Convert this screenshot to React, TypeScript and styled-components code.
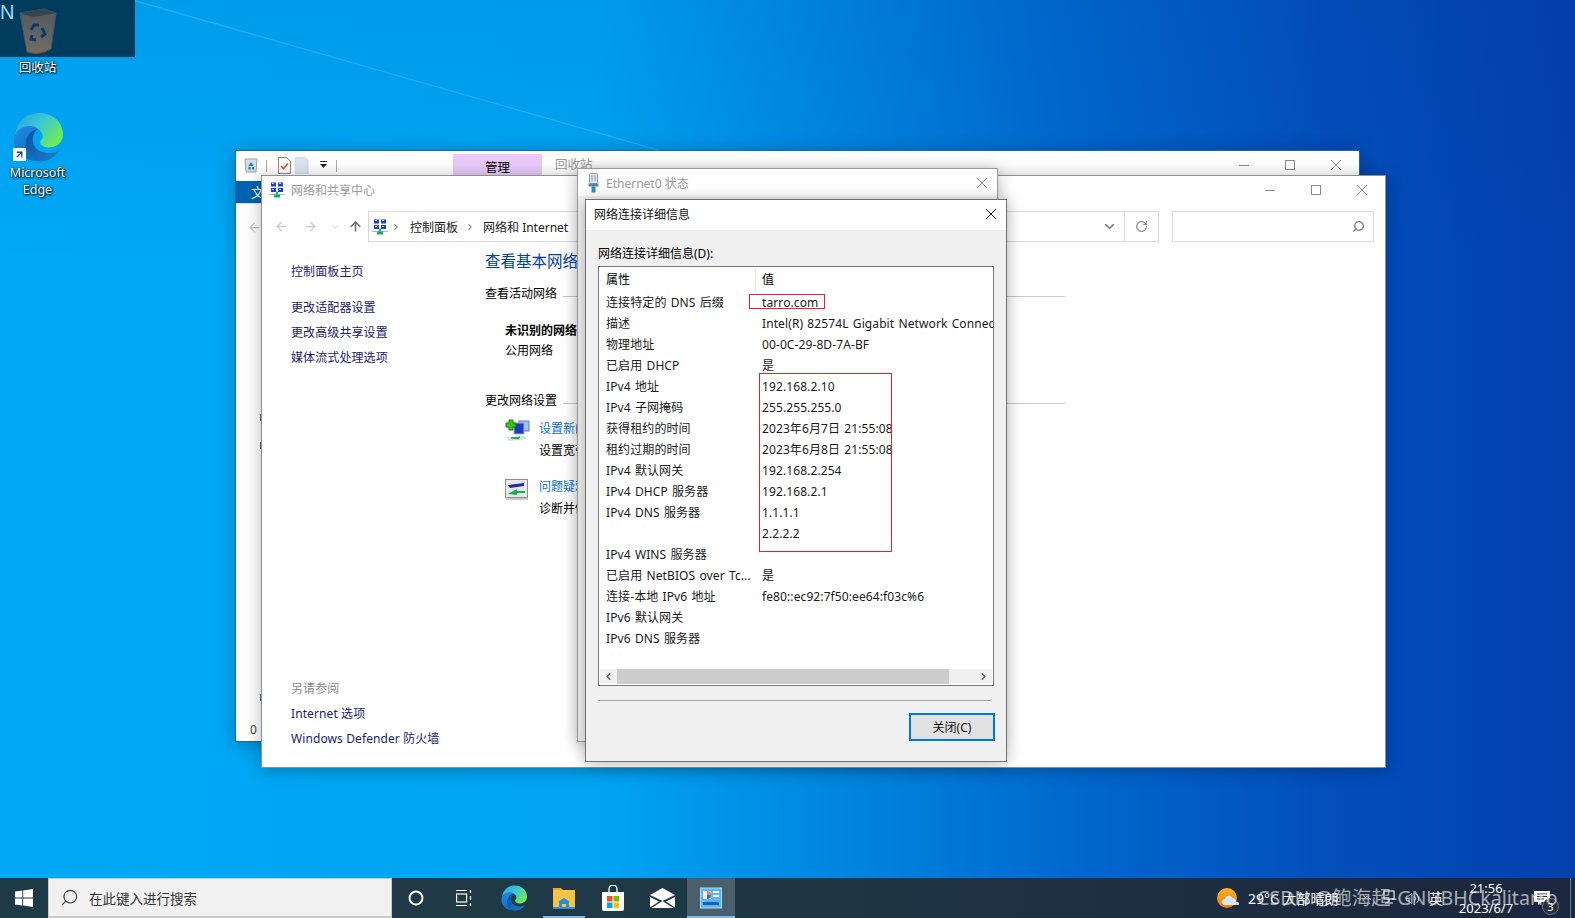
import React from "react";
import styled, { createGlobalStyle } from "styled-components";
import { ChevronDown, ChevronRight, ChevronLeft, ArrowLeft, ArrowRight, ArrowUp, RotateCw, Search, ChevronUp, Volume2 } from "lucide-react";

const Global = createGlobalStyle`
  html, body { margin: 0; padding: 0; width: 1575px; height: 918px; overflow: hidden; }
  body { font-family: "Noto Sans", "Noto Sans CJK SC", sans-serif; font-size: 12px; color: #000; }
  * { box-sizing: border-box; }
`;

const Screen = styled.div`
  width: 1575px; height: 918px; display: flex; flex-direction: column; overflow: hidden;
`;
const Desktop = styled.div`
  position: relative; flex: 1; overflow: hidden;
  background:
    linear-gradient(180deg, rgba(0,40,120,.08) 0%, rgba(0,0,0,0) 30%),
    linear-gradient(90deg, #00a8f6 0%, #00a4f3 38%, #0088e2 52%, #0068cf 68%, #034fbc 84%, #0340ae 100%);
`;
const Wallpaper = styled.svg`
  position: absolute; inset: 0; width: 100%; height: 100%;
`;
const Selection = styled.div`
  position: absolute; left: 0; top: 0; width: 135px; height: 57px; background: #003c5e; overflow: hidden;
`;
const CutLetter = styled.span`
  position: absolute; left: 0; top: 1px; font: 400 20px "Liberation Sans", sans-serif; color: #9ddcff;
`;
const DesktopIcon = styled.div<{ $y: number }>`
  position: absolute; left: 0; top: ${p => p.$y}px; width: 75px; display: flex; flex-direction: column; align-items: center;
`;
const DesktopLabel = styled.div<{ $top?: number }>`
  color: #fff; font-size: 12.5px; line-height: 17px; text-align: center; text-shadow: 1px 1px 2px #000, 0 0 2px #000; margin-top: ${p => p.$top || 0}px;
`;
const ShortcutBadge = styled.span`
  position: absolute; left: 0; top: 36px; width: 13px; height: 13px; background: #fff; display: flex; align-items: center; justify-content: center;
`;
const EdgeWrap = styled.div`
  position: relative; width: 50px; height: 50px; margin-bottom: 1px;
`;

const Win = styled.div<{ $x: number; $y: number; $w: number; $h: number; $border: string; $bg?: string }>`
  position: absolute; left: ${p => p.$x}px; top: ${p => p.$y}px; width: ${p => p.$w}px; height: ${p => p.$h}px;
  background: ${p => p.$bg || "#fff"}; border: 1px solid ${p => p.$border}; display: flex; flex-direction: column; overflow: hidden;
  box-shadow: 0 2px 16px rgba(0,0,0,.28);
`;
const Spacer = styled.div` flex: 1; `;
const Controls = styled.div<{ $h?: number }>`
  display: flex; align-items: center; height: ${p => p.$h ? `${p.$h}px` : "auto"};
`;
const Ctl = styled.span<{ $w?: number }>`
  width: ${p => p.$w || 46}px; display: flex; align-items: center; justify-content: center;
`;

/* recycle bin explorer */
const Qat = styled.div`
  height: 30px; display: flex; align-items: flex-start; padding: 3px 0 0 6px; flex: none;
`;
const QatIcon = styled.span<{ $before?: number }>`
  width: 18px; height: 22px; display: flex; align-items: center; justify-content: center; margin-left: ${p => p.$before || 0}px;
`;
const QatSep = styled.span<{ $before: number; $after: number }>`
  width: 1px; height: 12px; background: #a8a8a8; margin: 6px ${p => p.$after}px 0 ${p => p.$before}px;
`;
const ManageTab = styled.div`
  margin-left: 116px; width: 89px; height: 23px; background: #e9c9fa; display: flex; align-items: center; justify-content: center; padding-top: 1px; font-size: 12.5px;
`;
const RecycleTitle = styled.div`
  margin-left: 13px; color: #9a9a9a; line-height: 22px; font-size: 12.5px;
`;
const RibbonRow = styled.div`
  height: 22px; display: flex; flex: none; background: #fff; box-shadow: 0 1px 0 #dcdcdc;
`;
const FileTab = styled.div`
  width: 52px; background: #0063b1; color: #fff; padding-left: 15px; line-height: 22px; font-size: 13px;
`;
const BackNav = styled.div`
  padding: 17px 0 0 11px; color: #c8c8c8; flex: 1; position: relative;
`;
const BackStatus = styled.div`
  position: absolute; left: 14px; bottom: 3px; color: #444; font-size: 12px; word-spacing: 3px; white-space: nowrap;
`;
const ClipMark = styled.span<{ $y: number }>`
  position: absolute; left: 24px; top: ${p => p.$y}px; width: 2px; height: 7px; background: #2b79b5;
`;

/* network center */
const TitleBar = styled.div`
  height: 28px; display: flex; align-items: center; flex: none; padding-left: 7px;
`;
const FrontTitle = styled.div`
  margin-left: 6px; color: #9b9b9b; font-size: 12px;
`;
const NavBar = styled.div`
  height: 43px; display: flex; align-items: flex-start; padding: 7px 0 0 5px; flex: none;
`;
const NavBtn = styled.span<{ $w: number; $c?: string }>`
  width: ${p => p.$w}px; height: 31px; display: flex; align-items: center; justify-content: center; color: ${p => p.$c || "#c9c9c9"}; flex: none;
`;
const Address = styled.div`
  width: 791px; height: 31px; border: 1px solid #d9d9d9; display: flex; align-items: center; margin-left: 2px; padding-left: 3px;
`;
const Crumb = styled.span<{ $grow?: boolean; $left: number }>`
  font-size: 12px; margin: 0 7px 0 ${p => p.$left}px; color: #1a1a1a; flex: ${p => p.$grow ? 1 : "none"};
`;
const AddrBtn = styled.span<{ $w: number }>`
  width: ${p => p.$w}px; height: 29px; display: flex; align-items: center; justify-content: center; color: #808080;
`;
const AddrDiv = styled.span`
  width: 1px; height: 29px; background: #d9d9d9;
`;
const SearchBox = styled.div`
  width: 202px; height: 31px; border: 1px solid #d9d9d9; margin-left: 13px; display: flex; align-items: center; justify-content: flex-end; padding-right: 8px; color: #808080;
`;
const Content = styled.div`
  flex: 1; display: flex; min-height: 0;
`;
const Sidebar = styled.div`
  width: 223px; padding: 12px 0 16px 29px; display: flex; flex-direction: column; flex: none;
`;
const SideLink = styled.div<{ $gap?: number; $muted?: boolean }>`
  line-height: 25px; height: 25px; color: ${p => p.$muted ? "#8a8a8a" : "#1c1c6e"}; margin-bottom: ${p => p.$gap || 0}px; white-space: nowrap; letter-spacing: .1px;
`;
const Main = styled.div`
  width: 580px; padding-top: 2px; flex: none;
`;
const Heading = styled.div`
  font-size: 15.5px; line-height: 24px; color: #003fa8; white-space: nowrap;
`;
const Section = styled.div<{ $top: number }>`
  display: flex; align-items: center; height: 20px; margin-top: ${p => p.$top}px; white-space: nowrap;
`;
const SectionLine = styled.span`
  flex: 1; height: 1px; background: #c8c8c8; margin: 7px 0 0 6px;
`;
const NetBlock = styled.div<{ $top: number }>`
  padding-left: 20px; margin-top: ${p => p.$top}px; line-height: 20px;
`;
const Bold = styled.div` font-weight: 700; `;
const Task = styled.div<{ $top: number }>`
  display: flex; margin: ${p => p.$top}px 0 0 20px;
`;
const TaskIcon = styled.div<{ $top?: number }>` width: 34px; flex: none; padding-top: ${p => p.$top || 0}px; `;
const TaskText = styled.div` line-height: 22px; white-space: nowrap; `;
const TaskLink = styled.div` color: #0a6fd6; `;

/* ethernet */
const EthTitle = styled.div`
  margin-left: 6px; color: #9a9a9a; font-size: 12px;
`;
const EthBar = styled.div`
  height: 27px; display: flex; align-items: center; padding-left: 9px; flex: none;
`;
const EthBody = styled.div` flex: 1; background: #f0f0f0; `;

/* details */
const DlgTitle = styled.div`
  height: 30px; background: #fff; display: flex; align-items: center; padding: 0 0 2px 8px; flex: none; color: #111;
`;
const DlgBody = styled.div`
  flex: 1; background: #f0f0f0; padding: 15px 12px 0 12px; display: flex; flex-direction: column; min-height: 0;
`;
const ListLabel = styled.div` height: 21px; line-height: 18px; flex: none; `;
const ListBox = styled.div`
  position: relative; height: 420px; background: #fff; border: 1px solid #7a7a7a; display: flex; flex-direction: column; flex: none;
`;
const ListHead = styled.div`
  height: 24.5px; display: flex; align-items: center; flex: none; position: relative; padding: 0 0 .5px 7px;
`;
const HeadSep = styled.span`
  position: absolute; left: 156px; top: 2px; width: 1px; height: 22px; background: #e5e5e5;
`;
const Rows = styled.div` flex: 1; overflow: hidden; padding-left: 7px; min-height: 0; `;
const Row = styled.div`
  display: flex; height: 21px; align-items: center; white-space: nowrap; color: #1a1a1a; letter-spacing: .1px; word-spacing: 1px;
`;
const Prop = styled.div` width: 156px; flex: none; overflow: hidden; `;
const Val = styled.div<{ $left?: number }>` flex: none; margin-left: ${p => p.$left || 0}px; `;
const RedBox = styled.div<{ $l: number; $t: number; $w: number; $h: number }>`
  position: absolute; left: ${p => p.$l}px; top: ${p => p.$t}px; width: ${p => p.$w}px; height: ${p => p.$h}px; border: 1px solid #e8202a; pointer-events: none;
`;
const HScroll = styled.div`
  height: 15px; margin: 0 1px 1px; display: flex; align-items: center; background: #f0f0f0; flex: none; color: #555;
`;
const ScrollBtn = styled.span`
  width: 17px; display: flex; align-items: center; justify-content: center; flex: none;
`;
const Thumb = styled.div` width: 332px; height: 15px; background: #cdcdcd; flex: none; `;
const Groove = styled.div` flex: 1; `;
const Hr = styled.div` height: 1px; background: #a8a8a8; margin-top: 14px; margin-right: 3px; flex: none; `;
const DlgFoot = styled.div` display: flex; justify-content: flex-end; padding-top: 12px; `;
const CloseBtn = styled.div`
  width: 86px; height: 28px; background: #e1e1e1; border: 2px solid #0078d7; display: flex; align-items: center; justify-content: center; color: #111; margin-right: -1px;
`;

/* taskbar */
const Taskbar = styled.div`
  position: relative; height: 40px; flex: none; display: flex; align-items: stretch;
  background: linear-gradient(90deg, #1f3a47 0%, #1f3845 45%, #1d2c40 80%, #1b2640 100%);
  color: #fff;
`;
const StartBtn = styled.div` width: 48px; display: flex; align-items: center; justify-content: center; `;
const SearchBar = styled.div`
  width: 344px; background: #f1f1f1; display: flex; align-items: center; padding-left: 11px; color: #333; font-size: 13.5px; border: 1px solid #c8c8c8; border-bottom-width: 2px;
`;
const SearchHint = styled.span` margin-left: 10px; `;
const TbBtn = styled.div<{ $w: number; $open?: boolean; $active?: boolean }>`
  width: ${p => p.$w}px; display: flex; align-items: center; justify-content: center; position: relative;
  background: ${p => p.$active ? "#4a5e6c" : "transparent"};
  ${p => p.$open ? `&::after { content: ""; position: absolute; left: ${p.$active ? 0 : 4}px; right: ${p.$active ? 0 : 4}px; bottom: 0; height: 2px; background: #7cbcf0; }` : ""}
`;
const Tray = styled.div`
  position: absolute; inset: 0 0 0 auto; width: 361px; display: flex; align-items: center;
`;
const Weather = styled.div` width: 28px; display: flex; justify-content: center; flex: none; `;
const WeatherText = styled.div` margin-left: 6px; font-size: 14px; width: 108px; white-space: nowrap; flex: none; `;
const TrayIcon = styled.span<{ $w: number }>`
  width: ${p => p.$w}px; display: flex; justify-content: center; flex: none; font-size: 14px;
`;
const Clock = styled.div`
  width: 76px; text-align: center; font-size: 13px; line-height: 20px; flex: none;
`;
const Notify = styled.div`
  position: relative; width: 36px; display: flex; justify-content: center; flex: none;
`;
const Badge = styled.span`
  position: absolute; left: 18px; top: 7px; width: 17px; height: 17px; border-radius: 50%; background: rgba(40,50,60,.85); border: 1px solid #777; font-size: 11px; line-height: 15px; text-align: center;
`;
const ShowDesktop = styled.span`
  position: absolute; right: 4px; top: 0; bottom: 0; width: 1px; background: #6f7a85;
`;
const Watermark = styled.div`
  position: absolute; left: 1257px; top: 6px; font-size: 19.6px; line-height: 28px; color: rgba(230,230,230,.7); white-space: nowrap; pointer-events: none;
`;

/* drawings */
const NetIcon = ({ s = 16 }: { s?: number }) => (
  <svg width={s} height={s} viewBox="0 0 16 16">
    <rect x="2" y="0.5" width="5" height="4" fill="#1a3fc4" /><rect x="9" y="0.5" width="5" height="4" fill="#1a3fc4" />
    <rect x="2" y="6" width="5" height="4" fill="#1a3fc4" /><rect x="9" y="6" width="5" height="4" fill="#1a3fc4" />
    <rect x="3" y="1" width="2" height="1" fill="#bcd4ff" /><rect x="10" y="1" width="2" height="1" fill="#bcd4ff" />
    <rect x="3" y="7" width="2" height="1" fill="#bcd4ff" /><rect x="10" y="7" width="2" height="1" fill="#bcd4ff" />
    <rect x="0" y="12" width="16" height="1" fill="#b5b5b5" />
    <rect x="7" y="9.5" width="2" height="3" fill="#14b060" /><rect x="5" y="12.5" width="6" height="3" fill="#14b060" />
  </svg>
);
const Edge = ({ s = 50 }: { s?: number }) => {
  const id = `e${s}`;
  return (
    <svg width={s} height={s} viewBox="0 0 48 48">
      <defs>
        <linearGradient id={`${id}a`} x1="0" y1="0" x2="1" y2="0.6"><stop offset="0" stopColor="#2a9fe0" /><stop offset=".5" stopColor="#38c6d8" /><stop offset="1" stopColor="#6cec58" /></linearGradient>
        <linearGradient id={`${id}b`} x1="0" y1="0" x2="0.5" y2="1"><stop offset="0" stopColor="#1f8fe3" /><stop offset="1" stopColor="#0f6bc4" /></linearGradient>
        <linearGradient id={`${id}c`} x1="0" y1="0" x2="1" y2="1"><stop offset="0" stopColor="#0c4f9c" /><stop offset="1" stopColor="#1a7fd0" /></linearGradient>
      </defs>
      <path d="M2 22C4 9 13 1 25 1c13 0 23 9 23 20 0 8-6 13-14 13-4 0-8-2-8-5 0-1 1-2 2-3 1-2 1-6-3-9C19 13 7 13 2 22z" fill={`url(#${id}a)`} />
      <path d="M2 22C6 14 17 11 24 16c-7 1-13 8-12 17 1 6 5 11 10 14C10 47 0 37 1 26c0-1 .5-3 1-4z" fill={`url(#${id}b)`} />
      <path d="M24 16c-7 1-13 8-12 17 1 6 5 11 10 14 1 0 3 .5 4 .5 8 0 14-4 19-11-3 2-6 3-11 3-8 0-15-5-15-13 0-4 2-8 5-10.5z" fill={`url(#${id}c)`} />
    </svg>
  );
};
const Recycle = () => (
  <svg width="42" height="46" viewBox="0 0 42 46">
    <defs><linearGradient id="bin" x1="0" y1="0" x2="0" y2="1"><stop offset="0" stopColor="#52585c" /><stop offset=".8" stopColor="#6a6966" /><stop offset="1" stopColor="#7d6a5a" /></linearGradient></defs>
    <path d="M3 5 L27 1 L39 5 L34 41 Q22 48 10 44 Z" fill="url(#bin)" stroke="#47555c" />
    <path d="M3 5 L27 1 L39 5 L17 9 Z" fill="#33454e" />
    <g fill="none" stroke="#0d3a6a" strokeWidth="3">
      <path d="M14 22 l3-5 h5" /><path d="M25 20 l3 6 -4 3" /><path d="M19 32 l-5 -1 1 -4" />
    </g>
  </svg>
);
const PlugIcon = () => (
  <svg width="13" height="20" viewBox="0 0 13 20">
    <rect x="2.5" y="0.5" width="8" height="10" rx="1" fill="#dbe6ef" stroke="#7f98ad" />
    <path d="M5 2v6M8 2v6" stroke="#89a" />
    <rect x="1.5" y="10.5" width="10" height="3" fill="#5b87ae" />
    <rect x="4.5" y="13.5" width="4" height="6" fill="#2e88c8" />
  </svg>
);
const BinSmall = () => (
  <svg width="14" height="15" viewBox="0 0 14 15">
    <path d="M1 1h12l-1 13H2z" fill="#d5dde3" stroke="#9aa4ac" />
    <path d="M7 4l2.5 4h-5zM4.5 9h2v2.5h-2zM8 9h2v2.5H8z" fill="#1478c8" />
  </svg>
);
const DocCheck = () => (
  <svg width="13" height="17" viewBox="0 0 13 17">
    <path d="M.5.5h8l4 4v12H.5z" fill="#fff" stroke="#8a8a8a" />
    <path d="M3 9l2.5 2.5L10 6.5" fill="none" stroke="#e0521c" strokeWidth="1.6" />
  </svg>
);
const DocBlank = () => (
  <svg width="14" height="17" viewBox="0 0 14 17"><path d="M0 0h10l3 3 0 14H0z" fill="#dbe4f2" stroke="#c9d4e6" /></svg>
);
const QatDrop = () => (
  <svg width="10" height="10" viewBox="0 0 10 10"><rect x="1" y="1" width="7" height="1" fill="#222" /><path d="M1 4h7L4.5 8z" fill="#222" /></svg>
);
const NewConn = () => (
  <svg width="26" height="24" viewBox="0 0 26 24">
    <rect x="14" y="2" width="10" height="10" fill="#9ec4ee" stroke="#5a7fc0" />
    <rect x="9" y="4" width="10" height="11" fill="#1b3bc0" stroke="#aab" />
    <path d="M1 18l18-1 3 3-18 2z" fill="#d8dde0" />
    <path d="M6 19l9-1-2 2z" fill="#17b45a" stroke="#17b45a" />
    <path d="M4 1h4v3h3v4H8v3H4V8H1V4h3z" fill="#3fc01e" stroke="#1d7a10" />
  </svg>
);
const TroubleIcon = () => (
  <svg width="24" height="22" viewBox="0 0 24 22">
    <rect x=".5" y=".5" width="22" height="18" fill="#e8e8e8" stroke="#8f8f8f" />
    <path d="M3 6l16-2v3L5 9z" fill="#1c2f9c" />
    <path d="M3 15l9-5v2h8v2h-8v2z" fill="#16b04f" />
    <rect x="1" y="19" width="22" height="2" fill="#c9c9c9" />
  </svg>
);
const WinLogo = () => (
  <svg width="18" height="18" viewBox="0 0 18 18" fill="#fff">
    <path d="M0 2.6 7.3 1.6V8.5H0zM8.2 1.5 18 0V8.5H8.2zM0 9.5h7.3v6.9L0 15.4zM8.2 9.5H18V18L8.2 16.5z" />
  </svg>
);
const TaskView = () => (
  <svg width="16" height="18" viewBox="0 0 16 18" fill="none" stroke="#fff" strokeWidth="1.2">
    <path d="M0 1.5h11M0 16.5h11" /><rect x=".6" y="5" width="10" height="8" /><path d="M14.5 1v3M14.5 7v4M14.5 14v3" />
  </svg>
);
const Folder = () => (
  <svg width="24" height="24" viewBox="0 0 24 24">
    <path d="M1 2h8l2 2h-10z" fill="#e8a82c" />
    <rect x="1" y="4" width="22" height="19" fill="#f4c545" />
    <path d="M7 22V15l5-3 5 3v7h-3v-4h-4v4z" fill="#2a8fd8" />
    <rect x="1" y="21" width="22" height="2" fill="#2a8fd8" />
  </svg>
);
const Store = () => (
  <svg width="24" height="26" viewBox="0 0 24 26">
    <path d="M8 7V4a4 4 0 0 1 8 0v3" fill="none" stroke="#fff" strokeWidth="1.3" />
    <path d="M1 7h22v17a2 2 0 0 1-2 2H3a2 2 0 0 1-2-2z" fill="#fff" />
    <rect x="6" y="11" width="5.5" height="5.5" fill="#f25022" /><rect x="12.5" y="11" width="5.5" height="5.5" fill="#7fba00" />
    <rect x="6" y="17.5" width="5.5" height="5.5" fill="#00a4ef" /><rect x="12.5" y="17.5" width="5.5" height="5.5" fill="#ffb900" />
  </svg>
);
const Mail = () => (
  <svg width="25" height="20" viewBox="0 0 25 20" fill="#fff">
    <path d="M0 7 12.5 0 25 7 12.5 13z" /><path d="M0 9 9 13.5 0 19.5zM25 9 16 13.5 25 19.5zM1.5 20l11-7 11 7z" />
  </svg>
);
const Panel = () => (
  <svg width="22" height="22" viewBox="0 0 22 22">
    <rect x=".5" y="1" width="21" height="20" fill="#5cb8ec" stroke="#a7dcfa" />
    <rect x="3" y="4" width="8" height="8" fill="#f5f5f5" /><path d="M7 8V4a4 4 0 0 1 4 4z" fill="#e8862c" /><path d="M7 8h4a4 4 0 0 1-4 4z" fill="#2c6fd0" />
    <rect x="13" y="4" width="6" height="2" fill="#fff" /><rect x="13" y="8" width="6" height="2" fill="#fff" />
    <rect x="3" y="15" width="16" height="3" fill="#1d5fb0" />
  </svg>
);
const WeatherIcon = () => (
  <svg width="22" height="22" viewBox="0 0 22 22">
    <defs><linearGradient id="sun" x1="0" y1="0" x2="0" y2="1"><stop offset="0" stopColor="#f8b228" /><stop offset="1" stopColor="#f07a12" /></linearGradient></defs>
    <circle cx="10" cy="11" r="10" fill="url(#sun)" />
    <path d="M8 18a3 3 0 0 1 0-6 4 4 0 0 1 7.5-1 3.5 3.5 0 0 1 3.5 3.5c2 0 3 1 3 2s-.5 1.5-1.5 1.5z" fill="#d6e4f7" />
  </svg>
);
const NetTray = () => (
  <svg width="16" height="16" viewBox="0 0 16 16" fill="none" stroke="#fff" strokeWidth="1.1">
    <rect x="3" y="1" width="10" height="8" /><path d="M8 9v3M4 13h8" />
  </svg>
);
const NotifyIcon = () => (
  <svg width="16" height="14" viewBox="0 0 16 14" fill="#fff">
    <path d="M0 0h16v11H7L4 14v-3H0z" /><path d="M3 3h10M3 5.5h10M3 8h7" stroke="#26303f" strokeWidth="1" />
  </svg>
);
const MinGlyph = () => (
  <svg width="12" height="12" viewBox="0 0 12 12"><path d="M1 6.5h10" stroke="#8a8a8a" /></svg>
);
const MaxGlyph = () => (
  <svg width="12" height="12" viewBox="0 0 12 12"><rect x="1.5" y="1.5" width="9" height="9" fill="none" stroke="#8a8a8a" /></svg>
);
const CloseGlyph = ({ c = "#8a8a8a", s = 12 }: { c?: string; s?: number }) => (
  <svg width={s} height={s} viewBox="0 0 12 12"><path d="M1 1l10 10M11 1L1 11" stroke={c} fill="none" /></svg>
);

const rows: [string, string][] = [
  ["连接特定的 DNS 后缀", "tarro.com"],
  ["描述", "Intel(R) 82574L Gigabit Network Connection"],
  ["物理地址", "00-0C-29-8D-7A-BF"],
  ["已启用 DHCP", "是"],
  ["IPv4 地址", "192.168.2.10"],
  ["IPv4 子网掩码", "255.255.255.0"],
  ["获得租约的时间", "2023年6月7日 21:55:08"],
  ["租约过期的时间", "2023年6月8日 21:55:08"],
  ["IPv4 默认网关", "192.168.2.254"],
  ["IPv4 DHCP 服务器", "192.168.2.1"],
  ["IPv4 DNS 服务器", "1.1.1.1"],
  ["", "2.2.2.2"],
  ["IPv4 WINS 服务器", ""],
  ["已启用 NetBIOS over Tc...", "是"],
  ["连接-本地 IPv6 地址", "fe80::ec92:7f50:ee64:f03c%6"],
  ["IPv6 默认网关", ""],
  ["IPv6 DNS 服务器", ""],
];

const WinButtons = ({ h }: { h?: number }) => (
  <Controls $h={h}>
    <Ctl><MinGlyph /></Ctl>
    <Ctl><MaxGlyph /></Ctl>
    <Ctl><CloseGlyph /></Ctl>
  </Controls>
);

export default function App() {
  return (
    <Screen>
      <Global />
      <Desktop>
        <Wallpaper viewBox="0 0 1575 878" preserveAspectRatio="none">
          <polygon points="135,0 660,150 656,150 130,0" fill="rgba(120,210,255,.3)" />
        </Wallpaper>
        <Selection><CutLetter>N</CutLetter></Selection>
        <DesktopIcon $y={8}>
          <Recycle />
          <DesktopLabel $top={5}>回收站</DesktopLabel>
        </DesktopIcon>
        <DesktopIcon $y={112}>
          <EdgeWrap>
            <Edge />
            <ShortcutBadge><ArrowUp size={11} strokeWidth={3} color="#1c4f8f" style={{ transform: "rotate(45deg)" }} /></ShortcutBadge>
          </EdgeWrap>
          <DesktopLabel $top={1}>Microsoft<br />Edge</DesktopLabel>
        </DesktopIcon>

        <Win $x={235} $y={150} $w={1125} $h={592} $border="#1668b8">
          <Qat>
            <QatIcon><BinSmall /></QatIcon>
            <QatSep $before={6} $after={8} />
            <QatIcon><DocCheck /></QatIcon>
            <QatIcon><DocBlank /></QatIcon>
            <QatIcon $before={4}><QatDrop /></QatIcon>
            <QatSep $before={3} $after={0} />
            <ManageTab>管理</ManageTab>
            <RecycleTitle>回收站</RecycleTitle>
            <Spacer />
            <WinButtons h={22} />
          </Qat>
          <RibbonRow><FileTab>文件</FileTab></RibbonRow>
          <BackNav>
            <ArrowLeft size={15} strokeWidth={2} />
            <ClipMark $y={211} /><ClipMark $y={239} /><ClipMark $y={491} />
            <BackStatus>0 个项目</BackStatus>
          </BackNav>
        </Win>

        <Win $x={261} $y={175} $w={1125} $h={593} $border="#8f8f8f">
          <TitleBar>
            <NetIcon />
            <FrontTitle>网络和共享中心</FrontTitle>
            <Spacer />
            <WinButtons />
          </TitleBar>
          <NavBar>
            <NavBtn $w={29}><ArrowLeft size={15} strokeWidth={2} /></NavBtn>
            <NavBtn $w={29}><ArrowRight size={15} strokeWidth={2} /></NavBtn>
            <NavBtn $w={19}><ChevronDown size={10} strokeWidth={2} /></NavBtn>
            <NavBtn $w={22} $c="#6e6e6e"><ArrowUp size={15} strokeWidth={2.4} /></NavBtn>
            <Address>
              <NetIcon />
              <NavBtn $w={16} $c="#6e6e6e"><ChevronRight size={10} strokeWidth={2.5} /></NavBtn>
              <Crumb $left={6}>控制面板</Crumb>
              <NavBtn $w={10} $c="#6e6e6e"><ChevronRight size={10} strokeWidth={2.5} /></NavBtn>
              <Crumb $left={8} $grow>网络和 Internet</Crumb>
              <AddrBtn $w={30}><ChevronDown size={15} strokeWidth={2.4} /></AddrBtn>
              <AddrDiv />
              <AddrBtn $w={33}><RotateCw size={13} strokeWidth={2} /></AddrBtn>
            </Address>
            <SearchBox><Search size={13} strokeWidth={2.6} style={{ transform: "scaleX(-1)" }} /></SearchBox>
          </NavBar>
          <Content>
            <Sidebar>
              <SideLink $gap={11}>控制面板主页</SideLink>
              <SideLink>更改适配器设置</SideLink>
              <SideLink>更改高级共享设置</SideLink>
              <SideLink>媒体流式处理选项</SideLink>
              <Spacer />
              <SideLink $muted>另请参阅</SideLink>
              <SideLink>Internet 选项</SideLink>
              <SideLink>Windows Defender 防火墙</SideLink>
            </Sidebar>
            <Main>
              <Heading>查看基本网络信息并设置连接</Heading>
              <Section $top={10}>查看活动网络<SectionLine /></Section>
              <NetBlock $top={18}>
                <Bold>未识别的网络</Bold>
                公用网络
              </NetBlock>
              <Section $top={29}>更改网络设置<SectionLine /></Section>
              <Task $top={8}>
                <TaskIcon $top={1}><NewConn /></TaskIcon>
                <TaskText><TaskLink>设置新的连接或网络</TaskLink>设置宽带、拨号或 VPN 连接</TaskText>
              </Task>
              <Task $top={14}>
                <TaskIcon $top={3}><TroubleIcon /></TaskIcon>
                <TaskText><TaskLink>问题疑难解答</TaskLink>诊断并修复网络问题</TaskText>
              </Task>
            </Main>
          </Content>
        </Win>

        <Win $x={577} $y={168} $w={421} $h={574} $border="#9a9a9a">
          <EthBar>
            <PlugIcon />
            <EthTitle>Ethernet0 状态</EthTitle>
            <Spacer />
            <Ctl $w={30}><CloseGlyph /></Ctl>
          </EthBar>
          <EthBody />
        </Win>

        <Win $x={585} $y={199} $w={422} $h={563} $border="#6f6f6f" $bg="#f0f0f0">
          <DlgTitle>
            网络连接详细信息
            <Spacer />
            <Ctl $w={30}><CloseGlyph c="#111" /></Ctl>
          </DlgTitle>
          <DlgBody>
            <ListLabel>网络连接详细信息(D):</ListLabel>
            <ListBox>
              <ListHead>属性<HeadSep /><Val $left={132}>值</Val></ListHead>
              <Rows>
                {rows.map(([k, v], i) => (
                  <Row key={i}><Prop>{k}</Prop><Val>{v}</Val></Row>
                ))}
              </Rows>
              <HScroll>
                <ScrollBtn><ChevronLeft size={11} strokeWidth={3} /></ScrollBtn>
                <Thumb />
                <Groove />
                <ScrollBtn><ChevronRight size={11} strokeWidth={3} /></ScrollBtn>
              </HScroll>
              <RedBox $l={150} $t={27} $w={76} $h={15} />
              <RedBox $l={160} $t={106} $w={133} $h={179} />
            </ListBox>
            <Hr />
            <DlgFoot><CloseBtn>关闭(C)</CloseBtn></DlgFoot>
          </DlgBody>
        </Win>
      </Desktop>

      <Taskbar>
        <StartBtn><WinLogo /></StartBtn>
        <SearchBar>
          <Search size={19} strokeWidth={1.4} style={{ transform: "scaleX(-1)" }} />
          <SearchHint>在此键入进行搜索</SearchHint>
        </SearchBar>
        <TbBtn $w={48}><svg width="16" height="16" viewBox="0 0 16 16"><circle cx="8" cy="8" r="6.5" fill="none" stroke="#fff" strokeWidth="2" /></svg></TbBtn>
        <TbBtn $w={48}><TaskView /></TbBtn>
        <TbBtn $w={51}><Edge s={26} /></TbBtn>
        <TbBtn $w={50} $open><Folder /></TbBtn>
        <TbBtn $w={48}><Store /></TbBtn>
        <TbBtn $w={50}><Mail /></TbBtn>
        <TbBtn $w={48} $open $active><Panel /></TbBtn>
        <Tray>
          <Weather><WeatherIcon /></Weather>
          <WeatherText>29°C 大部晴朗</WeatherText>
          <TrayIcon $w={22}><ChevronUp size={14} strokeWidth={1.2} /></TrayIcon>
          <TrayIcon $w={22}><NetTray /></TrayIcon>
          <TrayIcon $w={24}><Volume2 size={15} strokeWidth={1.3} /></TrayIcon>
          <TrayIcon $w={24}>英</TrayIcon>
          <Clock>21:56<br />2023/6/7</Clock>
          <Notify><NotifyIcon /><Badge>3</Badge></Notify>
          <ShowDesktop />
        </Tray>
        <Watermark>CSDN @鲍海超-GNUBHCkalitarro</Watermark>
      </Taskbar>
    </Screen>
  );
}
